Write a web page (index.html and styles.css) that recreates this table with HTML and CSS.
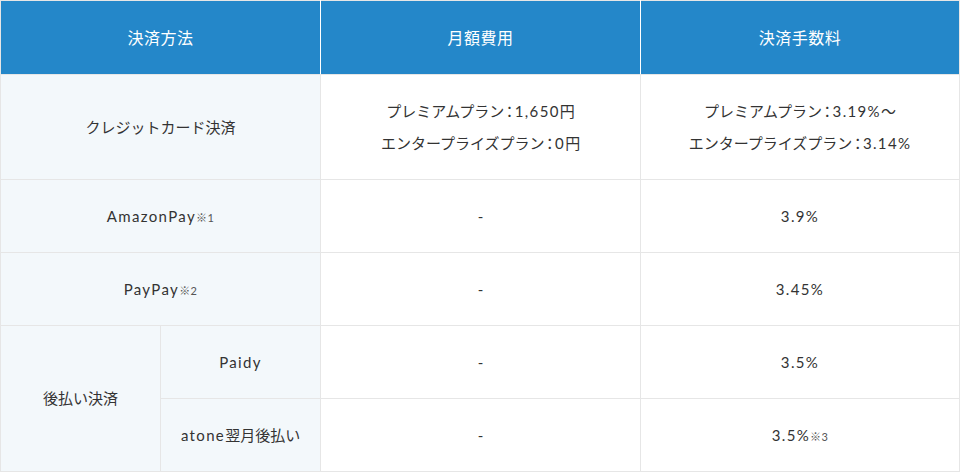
FILE: index.html
```html
<!DOCTYPE html>
<html lang="ja">
<head>
<meta charset="utf-8">
<link rel="stylesheet" href="styles.css">
</head>
<body>
<table class="fee-table">
  <colgroup>
    <col class="c-a"><col class="c-b"><col class="c-c"><col class="c-d">
  </colgroup>
  <thead>
    <tr class="head-row">
      <th colspan="2">決済方法</th>
      <th>月額費用</th>
      <th>決済手数料</th>
    </tr>
  </thead>
  <tbody>
    <tr class="row-tall">
      <th colspan="2" class="label">クレジットカード決済</th>
      <td><p>プレミアムプラン<span class="colon">：</span><span class="en">1,650</span>円</p><p>エンタープライズプラン<span class="colon">：</span><span class="en">0</span>円</p></td>
      <td><p>プレミアムプラン<span class="colon">：</span><span class="en">3.19%</span>〜</p><p>エンタープライズプラン<span class="colon">：</span><span class="en">3.14%</span></p></td>
    </tr>
    <tr>
      <th colspan="2" class="label"><span class="en">AmazonPay</span><span class="note">※1</span></th>
      <td>-</td>
      <td><span class="en">3.9%</span></td>
    </tr>
    <tr>
      <th colspan="2" class="label"><span class="en">PayPay</span><span class="note">※2</span></th>
      <td>-</td>
      <td><span class="en">3.45%</span></td>
    </tr>
    <tr>
      <th rowspan="2" class="label">後払い決済</th>
      <th class="label"><span class="en">Paidy</span></th>
      <td>-</td>
      <td><span class="en">3.5%</span></td>
    </tr>
    <tr>
      <th class="label sub-down"><span class="en">atone</span>翌月後払い</th>
      <td class="sub-down">-</td>
      <td class="sub-down"><span class="en">3.5%</span><span class="note">※3</span></td>
    </tr>
  </tbody>
</table>
</body>
</html>
```
FILE: styles.css
```css
html, body {
  margin: 0;
  padding: 0;
  background: #fff;
}
body {
  font-family: "Lato", "Noto Sans CJK JP", sans-serif;
  color: #333;
  font-size: 15px;
}
.fee-table {
  width: 959px;
  border-collapse: collapse;
  table-layout: fixed;
}
.c-a, .c-b { width: 160px; }
.c-c { width: 320px; }
.c-d { width: 319px; }

.fee-table th, .fee-table td {
  border: 1px solid #e6e6e6;
  text-align: center;
  vertical-align: middle;
  padding: 0;
  height: 72px;
  line-height: 1.5;
  letter-spacing: 0;
  font-weight: 400;
}
.head-row th {
  background: #2487c9;
  color: #fff;
  font-weight: 400;
  font-size: 16px;
  letter-spacing: 0.03em;
  height: 73px;
  border-left-color: #fff;
  border-right-color: #fff;
  border-top-color: #e6e6e6;
}
.head-row th:first-child { border-left-color: #e6e6e6; }
.head-row th:last-child { border-right-color: #e6e6e6; }
.label {
  background: #f3f8fb;
}
.row-tall th, .row-tall td { height: 104px; }
.fee-table p { margin: 0; line-height: 32px; }
.en { letter-spacing: 0.09em; }
.colon {
  font-feature-settings: "palt";
  padding: 0 0.1em;
}
.note {
  font-size: 11px;
  color: #555;
  letter-spacing: 0.04em;
}
.sub-down { padding-top: 6px; }
```
